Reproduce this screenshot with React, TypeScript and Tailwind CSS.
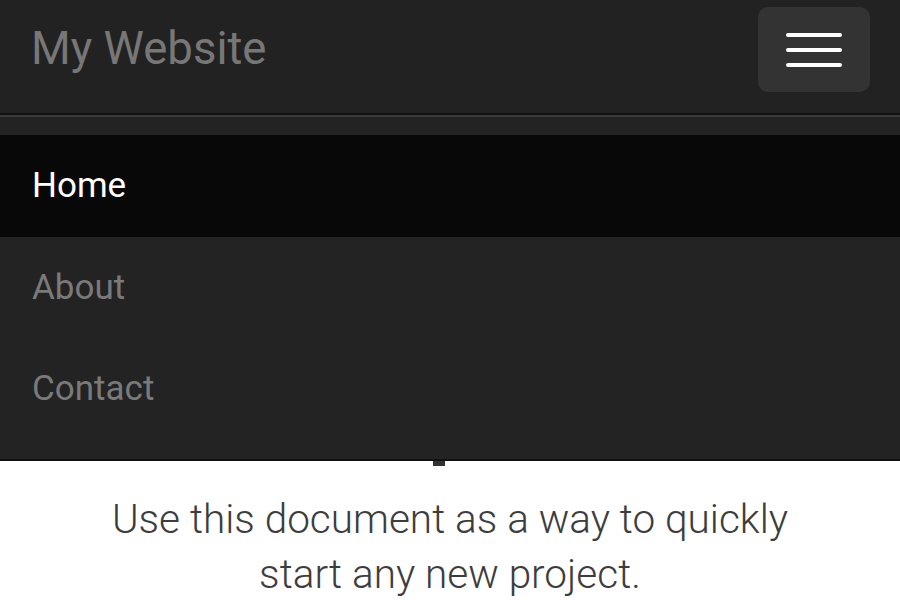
import React from "react";

export default function App() {
  return (
    <div className="relative min-h-[600px] h-[600px] overflow-hidden bg-white font-['Roboto','Liberation_Sans',sans-serif]">
      <header className="h-[115px] bg-[#222222] border-b-2 border-[#111111] flex items-start justify-between pl-8 pr-[30px] pt-[7px]">
        <a className="mt-[15px] -ml-px text-[45.5px] leading-[normal] text-[#777777]">My Website</a>
        <button className="w-[112px] h-[85px] rounded-[10px] bg-[#333333] flex flex-col items-center justify-center gap-[11px]">
          <span className="block w-[56px] h-[4px] rounded-full bg-white" />
          <span className="block w-[56px] h-[4px] rounded-full bg-white" />
          <span className="block w-[56px] h-[4px] rounded-full bg-white" />
        </button>
      </header>

      <main className="pt-[340px]">
        <div className="ml-[433px] w-[12px] h-[11px] bg-[#333333]" />
        <p className="mt-[26px] mx-auto w-[760px] text-center text-[40.5px] leading-[55px] font-light text-[#3d3d3d]">
          Use this document as a way to quickly start any new project.
        </p>
      </main>

      <nav className="absolute top-[115px] left-0 right-0 bg-[#232323] border-t-2 border-[#3a3a3a] border-b-2 border-b-[#111111] pt-[18px] pb-[20px]">
        <div className="h-[102px] bg-[#080808] pl-8 text-[35px] leading-[102px] text-white">Home</div>
        <div className="h-[101px] pl-8 text-[35px] leading-[101px] text-[#7a7a7a]">About</div>
        <div className="h-[101px] pl-8 text-[35px] leading-[101px] text-[#7a7a7a]">Contact</div>
      </nav>
    </div>
  );
}
